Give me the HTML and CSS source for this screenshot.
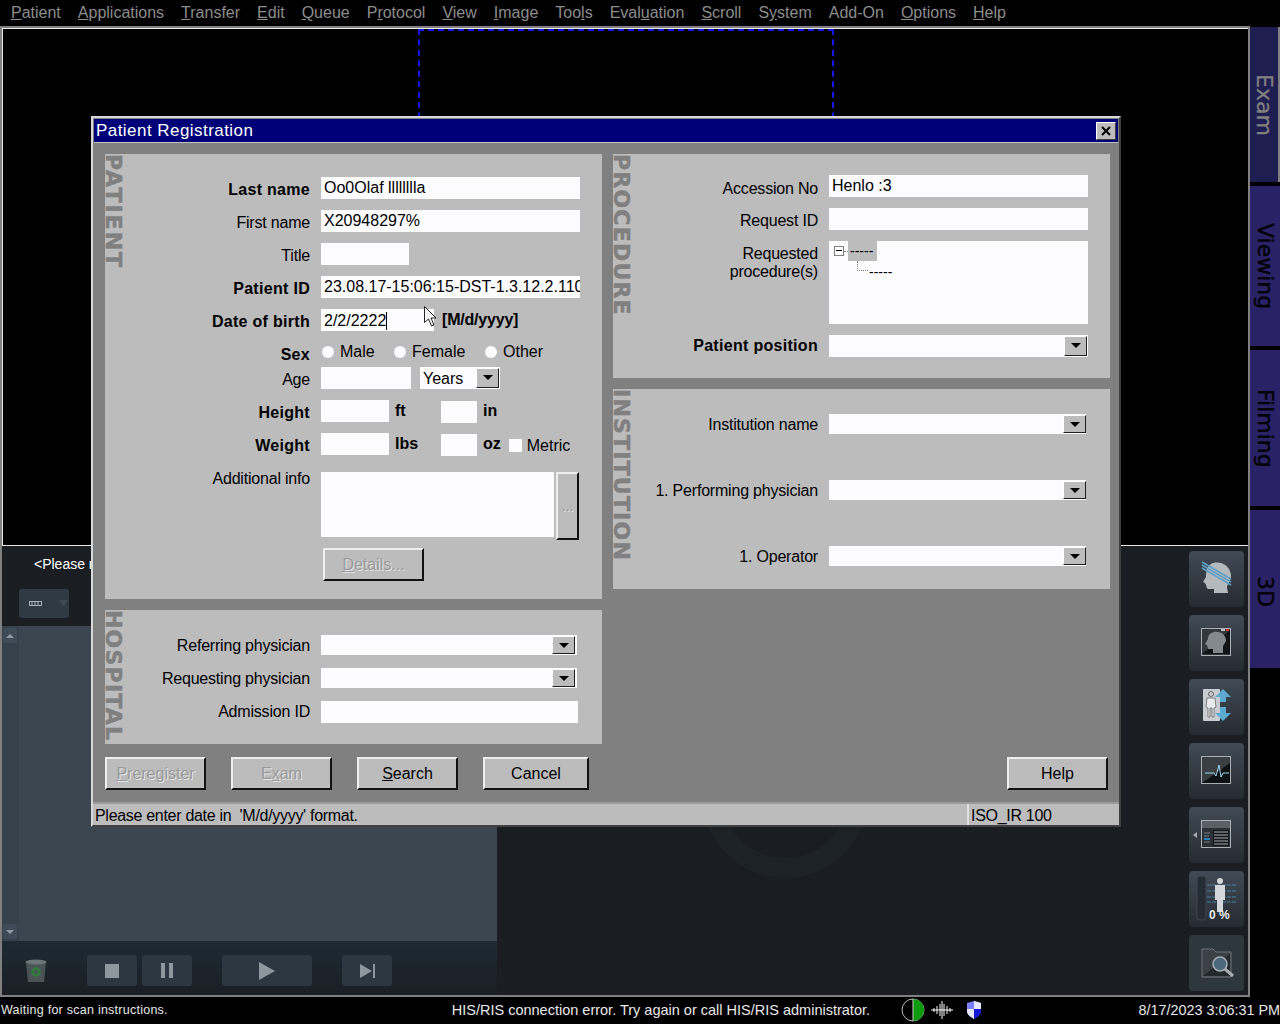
FILE: index.html
```html
<!DOCTYPE html>
<html lang="en">
<head>
    <meta charset="UTF-8">
    <title>Patient Registration</title>
    <link rel="stylesheet" href="styles.css">
</head>
<body>
    <div class="menubar">
        <span><u>P</u>atient</span>
        <span><u>A</u>pplications</span>
        <span><u>T</u>ransfer</span>
        <span><u>E</u>dit</span>
        <span><u>Q</u>ueue</span>
        <span>P<u>r</u>otocol</span>
        <span><u>V</u>iew</span>
        <span><u>I</u>mage</span>
        <span>Too<u>l</u>s</span>
        <span>Eval<u>u</u>ation</span>
        <span><u>S</u>croll</span>
        <span>S<u>y</u>stem</span>
        <span>Add-On</span>
        <span><u>O</u>ptions</span>
        <span><u>H</u>elp</span>
    </div>

    <div class="main">
        <div class="workspace">
            <div class="viewer">
                <div class="viewport-mark"></div>
            </div>
            <div class="lower">
                <div class="exam-side">
                    <div class="exam-head">
                        <div class="exam-title">&lt;Please r</div>
                        <div class="tool-btn">
                            <svg width="14" height="6" viewBox="0 0 14 6"><rect x="0.5" y="0.5" width="12" height="4" fill="none" stroke="#a8b0b8"/><path d="M3 1v3M6 1v3M9 1v3" stroke="#a8b0b8"/></svg>
                            <svg width="10" height="7" viewBox="0 0 10 7"><path d="M0 0h9L4.500 6z" fill="#3f4a55"/></svg>
                        </div>
                    </div>
                    <div class="exam-list">
                        <div class="scroll-col">
                            <div class="scroll-btn"><svg width="8" height="4" viewBox="0 0 8 4"><path d="M4 0l4 4H0z" fill="#8d98a2"/></svg></div>
                            <div class="scroll-btn"><svg width="8" height="4" viewBox="0 0 8 4"><path d="M0 0h8L4 4z" fill="#8d98a2"/></svg></div>
                        </div>
                    </div>
                    <div class="transport">
                        <svg class="trash" width="22" height="24" viewBox="0 0 22 24">
                            <path d="M1 3h20l-2 20H3z" fill="#4a5356"/>
                            <ellipse cx="11" cy="3" rx="10.500" ry="2.500" fill="#6c7578"/>
                            <circle cx="11" cy="13" r="3.500" fill="none" stroke="#2f7d3a" stroke-width="2.500"/>
                        </svg>
                        <div class="trans-btn"><svg width="14" height="14" viewBox="0 0 14 14"><rect width="14" height="14" fill="#8f979e"/></svg></div>
                        <div class="trans-btn"><svg width="13" height="15" viewBox="0 0 13 15"><path d="M0 0h4v15H0zM8 0h4v15H8z" fill="#8f979e"/></svg></div>
                        <div class="trans-btn wide"><svg width="16" height="18" viewBox="0 0 16 18"><path d="M0 0l16 9L0 18z" fill="#8f979e"/></svg></div>
                        <div class="trans-btn"><svg width="15" height="14" viewBox="0 0 15 14"><path d="M0 0l12 7L0 14zM13 0h2v14h-2z" fill="#8f979e"/></svg></div>
                    </div>
                </div>
                <div class="scan-side">
                    <div class="ring"></div>
                    <div class="icon-col">
                        <div class="icon-btn">
                            <svg width="55" height="56" viewBox="0 0 55 56">
                                <path d="M24 12c9-2 17 3 18 12 0 6-3 8-4 12l1 6H25v-4h-6c-2-1-1-3-2-4l-1-2-2-1 3-5c0-8 2-12 7-14z" fill="#b4b9be"/>
                                <path d="M13 11l29 17M13 14l29 17M13 17l29 17" stroke="#5f9fc6" stroke-width="1.500"/>
                            </svg>
                        </div>
                        <div class="icon-btn">
                            <svg width="55" height="56" viewBox="0 0 55 56">
                                <rect x="12.500" y="13.500" width="29" height="27" fill="#33383d" stroke="#a9aeb3"/>
                                <path d="M13 39l28-24v24z" fill="#111417"/>
                                <path d="M25 17c7-1 12 3 12 9l-3 5v7H24v-4h-5l-1-4-2-1 3-5c0-4 2-6 6-7z" fill="#84898e"/>
                                <path d="M32 14h4v2h-4z" fill="#bbb"/><path d="M37 14h3v2h-3z" fill="#d33"/>
                            </svg>
                        </div>
                        <div class="icon-btn">
                            <svg width="55" height="56" viewBox="0 0 55 56">
                                <rect x="14" y="10" width="17" height="32" rx="1" fill="#c9ccd0"/>
                                <circle cx="22" cy="15" r="2.500" fill="none" stroke="#666"/>
                                <path d="M18 19h8l1 9-2 1v9h-2v-9h-2v9h-2v-9l-2-1z" fill="#e8eaec" stroke="#666" stroke-width=".8"/>
                                <path d="M34 10l8 8h-5v5h-6v-5h-5z" fill="#5ca9d2"/>
                                <path d="M34 42l8-8h-5v-6h-6v6h-5z" fill="#5ca9d2"/>
                            </svg>
                        </div>
                        <div class="icon-btn">
                            <svg width="55" height="56" viewBox="0 0 55 56">
                                <rect x="12.500" y="13.500" width="29" height="27" fill="#3a3f44" stroke="#a9aeb3"/>
                                <path d="M13 40l28-20v20z" fill="#0e1114"/>
                                <path d="M16 30h9l2 3 3-11 2 12 2-4h6" fill="none" stroke="#9ed4ea"/>
                            </svg>
                        </div>
                        <div class="icon-btn">
                            <svg width="55" height="56" viewBox="0 0 55 56">
                                <path d="M4 28l4-3v6z" fill="#a6abb0"/>
                                <rect x="12.500" y="13.500" width="29" height="27" fill="#2b3036" stroke="#a9aeb3"/>
                                <path d="M13 14h28v7H13z" fill="#5b6066"/>
                                <path d="M24 23h16v16H24z" fill="#14181b"/>
                                <path d="M25 25h14M25 28h14M25 31h14M25 34h14M25 37h14" stroke="#a5aab0"/>
                                <path d="M15 26h6M15 29h5M15 35h6" stroke="#767c82"/>
                                <path d="M15 32h6" stroke="#2a9be0" stroke-width="1.500"/>
                            </svg>
                        </div>
                        <div class="icon-btn">
                            <svg width="55" height="56" viewBox="0 0 55 56">
                                <rect x="8" y="5" width="9" height="44" rx="3" fill="#252c33" stroke="#3d4852"/>
                                <path d="M18 14h30M18 20h30M18 26h30M18 31h30" stroke="#4e7f9c" stroke-dasharray="4 1"/>
                                <circle cx="31" cy="10" r="3" fill="#d5d8db"/>
                                <path d="M26 14h10v15h-2v12h-6V29h-2z" fill="#d5d8db"/>
                                <text x="20" y="48" class="dose">0 %</text>
                            </svg>
                        </div>
                        <div class="icon-btn flat">
                            <svg width="55" height="56" viewBox="0 0 55 56">
                                <path d="M13 14h11l3 3h15v25H13z" fill="#3a4046" stroke="#6d7278"/>
                                <path d="M14 41l27-22v22z" fill="#23282d"/>
                                <circle cx="31" cy="29" r="7" fill="#4a6a7c" stroke="#a9aeb3" stroke-width="1.500"/>
                                <path d="M36 34l8 7" stroke="#a9aeb3" stroke-width="3"/>
                            </svg>
                        </div>
                    </div>
                </div>
            </div>
        </div>
        <div class="tabs">
            <div class="tab active">Exam</div>
            <div class="tab viewing">Viewing</div>
            <div class="tab filming">Filming</div>
            <div class="tab three-d">3D</div>
        </div>
    </div>

    <div class="statusbar">
        <div class="status-left">Waiting for scan instructions.</div>
        <div class="status-mid">HIS/RIS connection error. Try again or call HIS/RIS administrator.</div>
        <div class="status-icons">
            <svg width="24" height="24" viewBox="0 0 24 24"><circle cx="12" cy="12" r="11" fill="#000" stroke="#bbb"/><path d="M12 1a11 11 0 0 1 0 22z" fill="#0d9a0d"/><path d="M12 1v22" stroke="#ccc"/></svg>
            <svg width="22" height="20" viewBox="0 0 22 20"><path d="M0 10h22M3 8v4M6 6v8M9 4v12M11 1v18M13 4v12M16 6v8M19 8v4" stroke="#fff"/></svg>
            <svg width="14" height="18" viewBox="0 0 14 18"><path d="M7 0l7 2v8c0 4-4 6-7 8-3-2-7-4-7-8V2z" fill="#7a80ff"/><path d="M7 0l7 2v6H7zM0 8h7v10c-3-2-7-4-7-8z" fill="#e6e8ff"/><path d="M7 8h7v2c0 4-4 6-7 8z" fill="#1616d8"/></svg>
        </div>
        <div class="status-time">8/17/2023 3:06:31 PM</div>
    </div>

    <div class="dialog">
        <div class="title-bar">
            <span>Patient Registration</span>
            <div class="close-btn"><svg width="10" height="10" viewBox="0 0 10 10"><path d="M1 1l8 8M9 1L1 9" stroke="#000" stroke-width="2"/></svg></div>
        </div>

        <div class="panels">
            <div class="col">
                <div class="panel patient">
                    <div class="side-label">PATIENT</div>
                    <div class="form">
                        <div class="row"><label class="strong">Last name</label><div class="field">Oo0Olaf lllllllla</div></div>
                        <div class="row"><label>First name</label><div class="field">X20948297%</div></div>
                        <div class="row"><label>Title</label><div class="field w-title"></div></div>
                        <div class="row"><label class="strong">Patient ID</label><div class="field">23.08.17-15:06:15-DST-1.3.12.2.110</div></div>
                        <div class="row"><label class="strong">Date of birth</label><div class="field w-dob"><span class="caret">2/2/2222</span></div><span class="unit date-hint">[M/d/yyyy]</span></div>
                        <div class="row row-sex">
                            <label class="strong">Sex</label>
                            <div class="radios">
                                <div class="radio-opt male"><i class="radio"></i>Male</div>
                                <div class="radio-opt female"><i class="radio"></i>Female</div>
                                <div class="radio-opt"><i class="radio"></i>Other</div>
                            </div>
                        </div>
                        <div class="row row-age">
                            <label>Age</label>
                            <div class="field w-age"></div>
                            <div class="combo w-years">Years<div class="arrow"></div></div>
                        </div>
                        <div class="row">
                            <label class="strong">Height</label>
                            <div class="field w-measure"></div><span class="unit u-first">ft</span>
                            <div class="field w-small"></div><span class="unit">in</span>
                        </div>
                        <div class="row">
                            <label class="strong">Weight</label>
                            <div class="field w-measure"></div><span class="unit u-first">lbs</span>
                            <div class="field w-small"></div><span class="unit">oz</span>
                            <i class="check"></i><span class="metric">Metric</span>
                        </div>
                        <div class="row row-info">
                            <label class="top-label">Additional info</label>
                            <div class="field info-box"></div>
                            <div class="btn dots disabled">...</div>
                        </div>
                        <div class="row row-details">
                            <div class="btn details disabled"><span><u>D</u>etails...</span></div>
                        </div>
                    </div>
                </div>

                <div class="panel hospital">
                    <div class="side-label">HOSPITAL</div>
                    <div class="form form-hospital">
                        <div class="row"><label>Referring physician</label><div class="combo w-hosp"><div class="arrow"></div></div></div>
                        <div class="row"><label>Requesting physician</label><div class="combo w-hosp"><div class="arrow"></div></div></div>
                        <div class="row"><label class="flush">Admission ID</label><div class="field w-admission"></div></div>
                    </div>
                </div>
            </div>

            <div class="col">
                <div class="panel procedure">
                    <div class="side-label">PROCEDURE</div>
                    <div class="form form-procedure">
                        <div class="row"><label class="low">Accession No</label><div class="field">Henlo :3</div></div>
                        <div class="row"><label>Request ID</label><div class="field"></div></div>
                        <div class="row row-tree">
                            <label class="two-line">Requested<br>procedure(s)</label>
                            <div class="field tree">
                                <div class="tree-root"><i class="minus"></i><i class="dots-h"></i><span class="sel">-----</span></div>
                                <div class="tree-child"><i class="elbow"></i><span>-----</span></div>
                            </div>
                        </div>
                        <div class="row"><label class="strong high">Patient position</label><div class="combo w-full"><div class="arrow"></div></div></div>
                    </div>
                </div>

                <div class="panel institution">
                    <div class="side-label">INSTITUTION</div>
                    <div class="form form-institution">
                        <div class="row"><label>Institution name</label><div class="combo w-inst"><div class="arrow"></div></div></div>
                        <div class="row"><label>1. Performing physician</label><div class="combo w-inst"><div class="arrow"></div></div></div>
                        <div class="row"><label>1. Operator</label><div class="combo w-inst"><div class="arrow"></div></div></div>
                    </div>
                </div>
            </div>
        </div>

        <div class="actions">
            <div class="btn disabled"><span><u>P</u>reregister</span></div>
            <div class="btn disabled"><span>E<u>x</u>am</span></div>
            <div class="btn"><span><u>S</u>earch</span></div>
            <div class="btn cancel"><span>Cancel</span></div>
            <div class="btn help"><span>Help</span></div>
        </div>

        <div class="dlg-status">
            <div class="msg">Please enter date in &nbsp;'M/d/yyyy' format.</div>
            <div class="charset">ISO_IR 100</div>
        </div>
    </div>

    <svg class="cursor" width="13" height="22" viewBox="0 0 13 22"><path d="M.5.500v16l4-3.500 3 7 2.500-1-3-7h5z" fill="#f6f6f6" stroke="#222"/></svg>
</body>
</html>
```

FILE: styles.css
```css
* {
    box-sizing: border-box;
}

html, body {
    margin: 0;
    padding: 0;
}

body {
    position: relative;
    width: 1280px;
    height: 1024px;
    overflow: hidden;
    background-color: #000;
    font-family: "Liberation Sans", Arial, sans-serif;
    font-size: 16px;
    color: #000;
}

/* top menu */
.menubar {
    display: flex;
    gap: 17px;
    height: 26px;
    padding-left: 11px;
    line-height: 25px;
    color: #8c8c8c;
    white-space: nowrap;
}

.main {
    display: flex;
    height: 971px;
}

.workspace {
    display: flex;
    flex-direction: column;
    width: 1250px;
    border: 2px solid #808080;
}

.viewer {
    position: relative;
    height: 518px;
    background-color: #000;
    border-top: 1px solid #e8e8e8;
    border-left: 1px solid #e8e8e8;
    border-bottom: 1px solid #e8e8e8;
}

.viewport-mark {
    position: absolute;
    left: 415px;
    top: 0;
    width: 416px;
    height: 100px;
    border: 2px dashed #1616e6;
    border-bottom: 0;
}

.lower {
    flex: 1;
    display: flex;
    background-color: #1a1e22;
}

.exam-side {
    display: flex;
    flex-direction: column;
    width: 495px;
}

.exam-head {
    height: 80px;
    padding: 10px 0 0 17px;
}

.exam-title {
    padding-left: 15px;
    font-size: 14px;
    line-height: 16px;
    color: #fff;
}

.tool-btn {
    display: flex;
    align-items: center;
    gap: 16px;
    width: 50px;
    height: 29px;
    margin-top: 17px;
    padding-left: 10px;
    background-color: #2f3a44;
    border-radius: 3px;
}

.exam-list {
    flex: 1;
    background-color: #3b4650;
}

.scroll-col {
    display: flex;
    flex-direction: column;
    justify-content: space-between;
    width: 17px;
    height: 100%;
    padding: 2px 2px 2px 1px;
    background-color: #35414b;
}

.scroll-btn {
    display: flex;
    align-items: center;
    justify-content: center;
    height: 15px;
    background-color: #3f4b56;
    border-radius: 2px;
}

.transport {
    display: flex;
    align-items: center;
    height: 54px;
    padding: 5px 0 0 23px;
    background: linear-gradient(#1d2a33, #1a1f24);
}

.trash {
    margin-right: 40px;
}

.trans-btn {
    display: flex;
    align-items: center;
    justify-content: center;
    width: 50px;
    height: 31px;
    margin-right: 5px;
    background-color: #2c3742;
    border-radius: 3px;
}

.trans-btn.wide {
    width: 90px;
    margin: 0 30px 0 25px;
}

.scan-side {
    position: relative;
    flex: 1;
    display: flex;
    justify-content: flex-end;
    padding: 5px 4px 0 0;
}

.ring {
    position: absolute;
    left: 205px;
    top: 166px;
    width: 166px;
    height: 166px;
    border: 20px solid #1c2226;
    border-radius: 50%;
}

.icon-col {
    display: flex;
    flex-direction: column;
    gap: 8px;
}

.icon-btn {
    width: 55px;
    height: 56px;
    background: linear-gradient(#414b55, #252b32);
    border-radius: 4px;
}

.icon-btn.flat {
    background: #2e363e;
}

.icon-btn svg {
    display: block;
}

.dose {
    font-size: 12px;
    font-weight: bold;
    fill: #e4e6e8;
}

/* right hand tabs */
.tabs {
    display: flex;
    flex-direction: column;
    gap: 4px;
    width: 30px;
    padding-top: 1px;
}

.tab {
    display: flex;
    align-items: center;
    justify-content: center;
    height: 158px;
    background-color: #2a2266;
    font-family: "DejaVu Sans", sans-serif;
    font-size: 22px;
    -webkit-text-stroke: .3px;
    writing-mode: vertical-rl;
    color: #000;
}

.tab.active {
    height: 155px;
    background-color: #1e1e50;
    border-right: 2px solid #808080;
    color: #808080;
}

.tab.viewing {
    height: 160px;
}

.tab.filming {
    height: 156px;
}

.tab.three-d {
    padding-top: 4px;
}

/* bottom status */
.statusbar {
    display: flex;
    align-items: center;
    height: 27px;
    padding-bottom: 1px;
    color: #e8e8e8;
    white-space: nowrap;
}

.status-left {
    width: 452px;
    padding-left: 1px;
    font-size: 12.500px;
    letter-spacing: .25px;
}

.status-mid {
    width: 449px;
    font-size: 14.500px;
}

.status-icons {
    display: flex;
    align-items: center;
    gap: 6px;
    width: 238px;
}

.status-icons svg:last-child {
    margin-left: 8px;
}

.status-time {
    font-size: 14.400px;
}

/* registration dialog */
.dialog {
    position: absolute;
    left: 91px;
    top: 116px;
    display: flex;
    flex-direction: column;
    width: 1030px;
    height: 711px;
    background-color: #808080;
    border: 2px solid;
    border-color: #d8d8d8 #404040 #404040 #d8d8d8;
}

.title-bar {
    display: flex;
    align-items: center;
    justify-content: space-between;
    flex: none;
    height: 24px;
    margin: 1px 1px 0;
    padding: 0 2px;
    background-color: #000078;
    border-bottom: 1px solid #c0c0c0;
    font-size: 17px;
    color: #fff;
    letter-spacing: .45px;
}

.close-btn {
    display: flex;
    align-items: center;
    justify-content: center;
    width: 20px;
    height: 18px;
    background-color: #bdbdbd;
    border: 1px solid;
    border-color: #fff #404040 #404040 #fff;
}

.panels {
    display: flex;
    gap: 11px;
    flex: none;
    height: 601px;
    padding: 11px 0 0 12px;
}

.col {
    display: flex;
    flex-direction: column;
    gap: 11px;
    width: 497px;
}

.panel {
    display: flex;
    background-color: #bcbcbd;
}

.patient {
    height: 445px;
}

.hospital {
    height: 134px;
}

.procedure {
    height: 224px;
}

.institution {
    height: 200px;
}

.side-label {
    flex: none;
    width: 20px;
    padding: 0 4px 0 0;
    font-family: "DejaVu Sans", sans-serif;
    font-size: 22px;
    font-weight: bold;
    line-height: 16px;
    letter-spacing: 1.200px;
    -webkit-text-stroke: .5px #808080;
    writing-mode: vertical-rl;
    color: #808080;
    white-space: nowrap;
}

.patient .side-label {
    letter-spacing: 2px;
}

.form {
    display: flex;
    flex-direction: column;
    gap: 11px;
    padding-top: 23px;
}

.form-hospital {
    gap: 13px;
    padding-top: 25px;
}

.form-hospital .row {
    height: 20px;
}

.form-hospital .row:last-child {
    height: 22px;
}

.form-procedure {
    padding-top: 21px;
}

.form-institution {
    gap: 46px;
    padding-top: 25px;
}

.form-institution .row {
    height: 20px;
}

.row {
    display: flex;
    align-items: center;
    height: 22px;
    white-space: nowrap;
}

.row label {
    flex: none;
    width: 185px;
    margin-right: 11px;
    padding-top: 4px;
    letter-spacing: -.2px;
    text-align: right;
}

.row label.strong {
    font-weight: bold;
    letter-spacing: .3px;
}

.row label.low {
    padding-top: 6px;
}

.row label.high {
    padding-top: 0;
}

.field {
    flex: none;
    width: 259px;
    height: 22px;
    padding-left: 3px;
    overflow: hidden;
    background-color: #fcfcff;
    line-height: 22px;
    white-space: nowrap;
}

.w-title {
    width: 88px;
}

.w-dob {
    width: 113px;
}

.caret {
    display: inline-block;
    height: 18px;
    line-height: 18px;
    vertical-align: middle;
    border-right: 1px solid #000;
}

.unit {
    margin-left: 6px;
    font-weight: bold;
}

.date-hint {
    margin-left: 8px;
    letter-spacing: -.2px;
}

.row-sex {
    margin-top: -2px;
}

.row-sex label {
    padding-top: 8px;
}

.radios {
    display: flex;
    padding: 2px 0 0 1px;
}

.radio-opt {
    display: flex;
    align-items: center;
    gap: 6px;
}

.radio-opt.male {
    width: 72px;
}

.radio-opt.female {
    width: 91px;
}

.radio {
    width: 12px;
    height: 12px;
    margin-top: -1px;
    background-color: #fcfcff;
    border-radius: 50%;
}

.row-age {
    margin-top: -6px;
}

.w-age {
    width: 90px;
}

.w-years {
    width: 80px;
    margin-left: 9px;
    padding-top: 2px;
}

.w-years .arrow {
    margin-top: -2px;
}

.w-measure {
    width: 68px;
}

.u-first {
    width: 46px;
}

.w-small {
    width: 36px;
    margin-top: 2px;
}

.check {
    width: 13px;
    height: 13px;
    margin: 2px 0 0 8px;
    background-color: #fcfcff;
}

.metric {
    margin: 4px 0 0 5px;
}

.combo {
    display: flex;
    align-items: center;
    flex: none;
    height: 22px;
    padding-left: 3px;
    background-color: #fcfcff;
}

.w-full {
    width: 259px;
}

.w-inst {
    width: 257px;
    height: 20px;
}

.w-hosp {
    width: 256px;
    height: 20px;
}

.arrow {
    position: relative;
    width: 23px;
    height: 20px;
    margin: 0 1px 0 auto;
    background-color: #bcbcbd;
    border: 1px solid;
    border-color: #fff #202020 #202020 #fff;
}

.w-inst .arrow {
    height: 18px;
    margin-right: 0;
}

.w-hosp .arrow {
    height: 18px;
    margin-right: 2px;
}

.arrow::after {
    content: "";
    position: absolute;
    left: 6px;
    top: 6px;
    border: 5px solid transparent;
    border-top-color: #000;
    border-bottom: 0;
}

.w-admission {
    width: 257px;
}

.form-hospital .row label,
.form-institution .row label {
    padding-top: 2px;
}

.form-hospital .row label.flush {
    padding-top: 0;
}

.row-info {
    align-items: flex-start;
    height: 68px;
    margin-top: 6px;
}

.row label.top-label {
    padding-top: 0;
    line-height: 14px;
}

.info-box {
    width: 233px;
    height: 65px;
}

.btn {
    display: flex;
    align-items: center;
    justify-content: center;
    width: 101px;
    height: 33px;
    margin-right: 25px;
    background-color: #bcbcbd;
    border: 2px solid;
    border-color: #eee #111 #111 #eee;
    white-space: nowrap;
}

.btn.disabled {
    color: #9a9a9a;
    text-shadow: 1px 1px 0 #e4e4e4;
}

.btn.dots {
    width: 23px;
    height: 68px;
    margin: 0 0 0 2px;
    font-size: 14px;
}

.row-details {
    height: 33px;
    margin-top: -3px;
}

.btn.details {
    margin: 0 0 0 198px;
}

/* procedures tree */
.row-tree {
    align-items: flex-start;
    height: 83px;
}

.row label.two-line {
    padding-top: 4px;
    line-height: 18px;
}

.tree {
    height: 83px;
    padding: 0;
    font-size: 14px;
    line-height: 20px;
}

.tree-root {
    display: flex;
    align-items: center;
    height: 20px;
    padding-left: 5px;
}

.minus {
    position: relative;
    width: 10px;
    height: 10px;
    border: 1px solid #808080;
}

.minus::after {
    content: "";
    position: absolute;
    left: 1px;
    top: 3px;
    width: 6px;
    height: 1px;
    background-color: #000;
}

.dots-h {
    width: 4px;
    border-top: 1px dotted #808080;
}

.sel {
    width: 29px;
    height: 20px;
    padding-left: 2px;
    background-color: #bcbcbd;
}

.tree-child {
    display: flex;
    height: 22px;
    padding-left: 28px;
    line-height: 22px;
}

.elbow {
    width: 11px;
    height: 10px;
    margin-right: 1px;
    border-left: 1px dotted #808080;
    border-bottom: 1px dotted #808080;
}

/* bottom buttons */
.actions {
    display: flex;
    flex: none;
    margin-top: 13px;
    padding-left: 12px;
}

.btn.cancel {
    width: 106px;
}

.btn.help {
    margin: 0 11px 0 auto;
}

.dlg-status {
    display: flex;
    flex: none;
    height: 23px;
    margin-top: 12px;
    background-color: #bcbcbd;
    border-top: 2px solid #9a9a9a;
    line-height: 23px;
    letter-spacing: -.3px;
}

.msg {
    flex: 1;
    padding-left: 2px;
}

.charset {
    width: 152px;
    padding-left: 2px;
    border-left: 2px solid #e0e0e0;
}

.cursor {
    position: absolute;
    left: 424px;
    top: 306px;
}
```
